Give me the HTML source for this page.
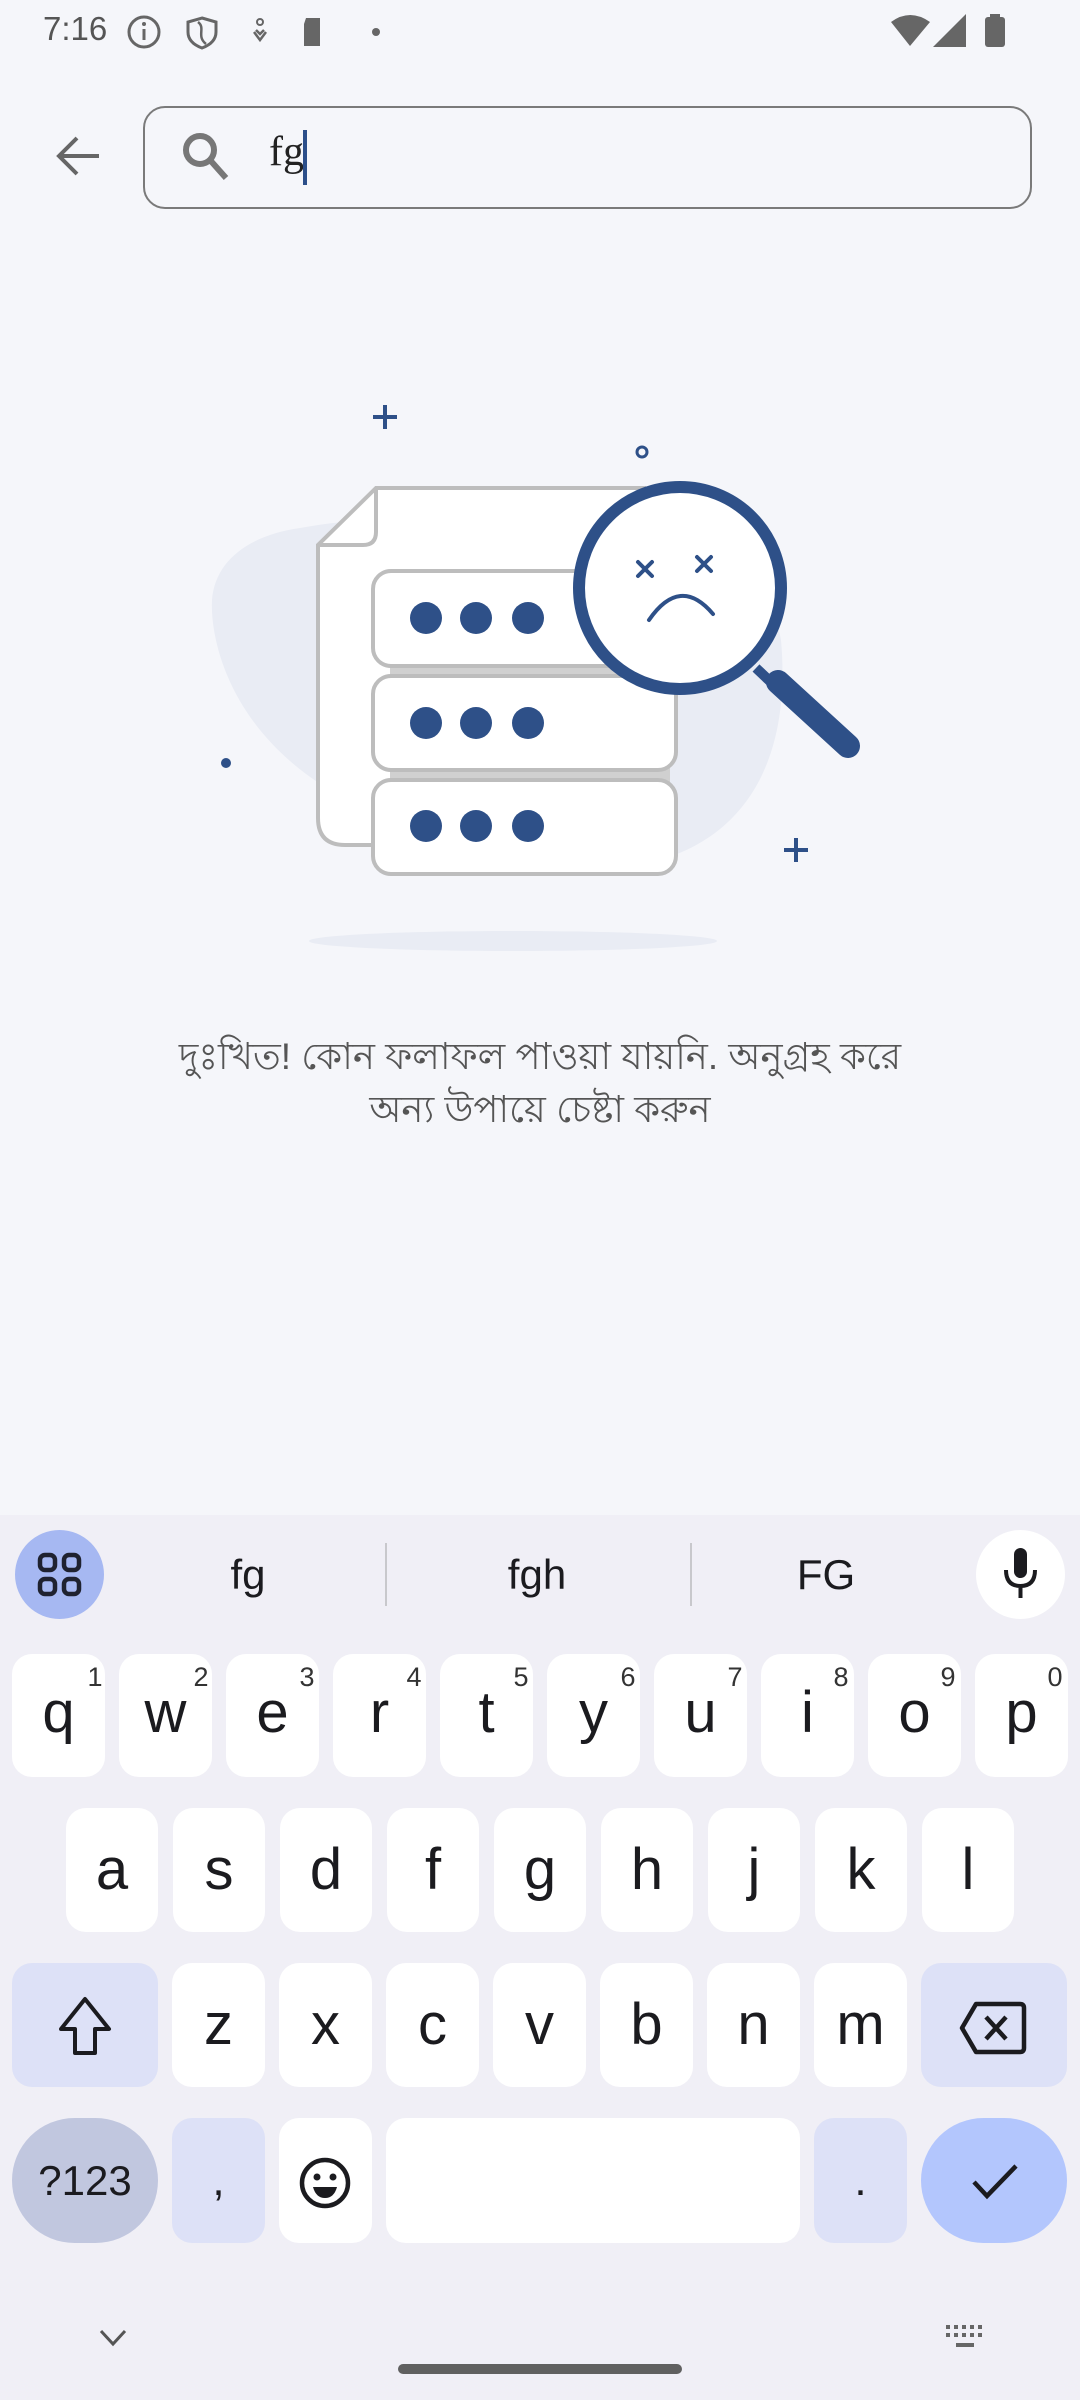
<!DOCTYPE html>
<html><head><meta charset="utf-8">
<style>
*{margin:0;padding:0;box-sizing:border-box}
body{width:1080px;height:2400px;background:#f5f6fa;position:relative;overflow:hidden;font-family:"Liberation Sans",sans-serif}
.abs{position:absolute}
.kb{position:absolute;left:0;top:1515px;width:1080px;height:885px;background:#f0eff6}
.key{position:absolute;background:#fff;border-radius:20px;color:#1b1b1f;font-size:58px;text-align:center}
.n{position:absolute;font-size:27px;color:#333;width:30px;text-align:center}
.sug{position:absolute;top:1551px;font-size:42px;color:#1b1b1f;transform:translateX(-50%)}
</style></head><body>
<div class="abs" style="left:43px;top:10px;font-size:33px;color:#555">7:16</div>
<svg class="abs" style="left:126px;top:14px" width="260" height="36" viewBox="0 0 260 36">
 <circle cx="18" cy="18" r="15" fill="none" stroke="#666" stroke-width="3"/>
 <rect x="16.5" y="15" width="3" height="11" fill="#666"/><circle cx="18" cy="10" r="2" fill="#666"/>
 <path d="M76 4 L90 8 V18 C90 26 84 31 76 34 C68 31 62 26 62 18 V8 Z" fill="none" stroke="#666" stroke-width="3"/>
 <path d="M72 8 C80 14 70 22 80 30" fill="none" stroke="#666" stroke-width="2.5"/>
 <circle cx="134" cy="8" r="3" fill="none" stroke="#666" stroke-width="2"/>
 <path d="M128 18 L134 26 L140 18 M130 16 L134 20 L138 16" fill="none" stroke="#666" stroke-width="2.5"/>
 <path d="M180 4 H194 V32 H178 V10 Z" fill="#666"/>
 <circle cx="250" cy="18" r="4" fill="#666"/>
</svg>
<svg class="abs" style="left:888px;top:12px" width="130" height="40" viewBox="0 0 130 40">
 <path d="M3 10 Q22 -4 42 10 L22 34 Z" fill="#666"/>
 <path d="M45 35 L78 2 V35 Z" fill="#666"/>
 <rect x="97" y="5" width="20" height="30" rx="3" fill="#666"/><rect x="102" y="2" width="10" height="4" fill="#666"/>
</svg>
<svg class="abs" style="left:55px;top:134px" width="48" height="44" viewBox="0 0 48 44">
 <path d="M44 22 H6 M22 4 L4 22 L22 40" fill="none" stroke="#666" stroke-width="4"/>
</svg>
<div class="abs" style="left:143px;top:106px;width:889px;height:103px;border:2px solid #7a7a7a;border-radius:22px;background:#f5f6fa"></div>
<svg class="abs" style="left:180px;top:132px" width="56" height="50" viewBox="0 0 56 50">
 <circle cx="20" cy="18" r="14" fill="none" stroke="#777" stroke-width="6"/>
 <path d="M30 28 L46 46" stroke="#777" stroke-width="6"/>
</svg>
<div class="abs" style="left:269px;top:128px;font-family:'Liberation Serif',serif;font-size:42px;color:#222">fg</div>
<div class="abs" style="left:303px;top:130px;width:4px;height:55px;background:#2c4f8a"></div>
<svg class="abs" style="left:0;top:380px" width="1080" height="600" viewBox="0 380 1080 600">
 <path d="M300 528 C400 510 500 520 560 560 C660 500 760 530 781 640 C790 740 760 830 660 860 C540 880 420 860 330 790 C230 730 210 640 212 600 C215 560 250 535 300 528 Z" fill="#e9ecf4"/>
 <ellipse cx="513" cy="941" rx="204" ry="10" fill="#e9ecf4"/>
 <path d="M376 488 H644 V845 H345 Q318 845 318 818 V545 Z" fill="#fff" stroke="#bdbdbd" stroke-width="4"/>
 <path d="M376 488 V532 Q376 545 363 545 H318" fill="none" stroke="#bdbdbd" stroke-width="4"/>
 <rect x="390" y="664" width="280" height="14" fill="#d0d0d0"/>
 <rect x="390" y="768" width="280" height="14" fill="#d0d0d0"/>
 <rect x="373" y="571" width="303" height="95" rx="18" fill="#fff" stroke="#bdbdbd" stroke-width="4"/>
 <rect x="373" y="676" width="303" height="94" rx="18" fill="#fff" stroke="#bdbdbd" stroke-width="4"/>
 <rect x="373" y="780" width="303" height="94" rx="18" fill="#fff" stroke="#bdbdbd" stroke-width="4"/>
 <g fill="#2e5088">
  <circle cx="426" cy="618" r="16"/><circle cx="476" cy="618" r="16"/><circle cx="528" cy="618" r="16"/>
  <circle cx="426" cy="723" r="16"/><circle cx="476" cy="723" r="16"/><circle cx="528" cy="723" r="16"/>
  <circle cx="426" cy="826" r="16"/><circle cx="476" cy="826" r="16"/><circle cx="528" cy="826" r="16"/>
 </g>
 <path d="M756 668 L775 686" stroke="#2e5088" stroke-width="10"/>
 <path d="M778 682 L848 746" stroke="#2e5088" stroke-width="24" stroke-linecap="round"/>
 <circle cx="680" cy="588" r="101" fill="#fff" stroke="#2e5088" stroke-width="12"/>
 <g stroke="#2e5088" stroke-width="4" stroke-linecap="round" fill="none">
  <path d="M638 562 L652 576 M652 562 L638 576"/>
  <path d="M697 557 L711 571 M711 557 L697 571"/>
  <path d="M649 620 Q680 575 713 614"/>
 </g>
 <path d="M385 405 V429 M373 417 H397" stroke="#2e5088" stroke-width="4"/>
 <circle cx="642" cy="452" r="5" fill="none" stroke="#2e5088" stroke-width="3"/>
 <circle cx="226" cy="763" r="5" fill="#2e5088"/>
 <path d="M796 838 V862 M784 850 H808" stroke="#2e5088" stroke-width="4"/>
</svg>
<div class="abs" style="left:0;top:1030px;width:1080px;text-align:center;font-size:37px;line-height:53px;color:#555;font-family:'Liberation Sans',sans-serif">দুঃখিত! কোন ফলাফল পাওয়া যায়নি. অনুগ্রহ করে<br>অন্য উপায়ে চেষ্টা করুন</div>
<div class="kb"></div>
<div class="abs" style="left:15px;top:1530px;width:89px;height:89px;border-radius:50%;background:#a6b8f2"></div>
<svg class="abs" style="left:37px;top:1552px" width="46" height="46" viewBox="0 0 46 46">
 <g fill="none" stroke="#1f2230" stroke-width="4.5"><rect x="3" y="3" width="15" height="15" rx="5"/><rect x="27" y="3" width="15" height="15" rx="5"/><rect x="3" y="27" width="15" height="15" rx="5"/><rect x="27" y="27" width="15" height="15" rx="5"/></g>
</svg>
<div class="sug" style="left:248px">fg</div>
<div class="sug" style="left:537px">fgh</div>
<div class="sug" style="left:826px">FG</div>
<div class="abs" style="left:385px;top:1543px;width:2px;height:63px;background:#c8c8cc"></div>
<div class="abs" style="left:690px;top:1543px;width:2px;height:63px;background:#c8c8cc"></div>
<div class="abs" style="left:976px;top:1530px;width:89px;height:89px;border-radius:50%;background:#fff"></div>
<svg class="abs" style="left:996px;top:1548px" width="50" height="52" viewBox="0 0 50 52">
 <rect x="18" y="0" width="13" height="30" rx="6.5" fill="#1b1b1f"/>
 <path d="M10 22 Q10 38 24.5 38 Q39 38 39 22 M24.5 38 V50" fill="none" stroke="#1b1b1f" stroke-width="4"/>
</svg>
<!-- row1 -->
<div class="key" style="left:12px;top:1654px;width:93px;height:123px;line-height:118px">q</div>
<div class="key" style="left:119px;top:1654px;width:93px;height:123px;line-height:118px">w</div>
<div class="key" style="left:226px;top:1654px;width:93px;height:123px;line-height:118px">e</div>
<div class="key" style="left:333px;top:1654px;width:93px;height:123px;line-height:118px">r</div>
<div class="key" style="left:440px;top:1654px;width:93px;height:123px;line-height:118px">t</div>
<div class="key" style="left:547px;top:1654px;width:93px;height:123px;line-height:118px">y</div>
<div class="key" style="left:654px;top:1654px;width:93px;height:123px;line-height:118px">u</div>
<div class="key" style="left:761px;top:1654px;width:93px;height:123px;line-height:118px">i</div>
<div class="key" style="left:868px;top:1654px;width:93px;height:123px;line-height:118px">o</div>
<div class="key" style="left:975px;top:1654px;width:93px;height:123px;line-height:118px">p</div>
<div class="n" style="left:80px;top:1662px">1</div>
<div class="n" style="left:186px;top:1662px">2</div>
<div class="n" style="left:292px;top:1662px">3</div>
<div class="n" style="left:399px;top:1662px">4</div>
<div class="n" style="left:506px;top:1662px">5</div>
<div class="n" style="left:613px;top:1662px">6</div>
<div class="n" style="left:720px;top:1662px">7</div>
<div class="n" style="left:826px;top:1662px">8</div>
<div class="n" style="left:933px;top:1662px">9</div>
<div class="n" style="left:1040px;top:1662px">0</div>
<!-- row2 -->
<div class="key" style="left:66px;top:1808px;width:92px;height:124px;line-height:124px">a</div>
<div class="key" style="left:173px;top:1808px;width:92px;height:124px;line-height:124px">s</div>
<div class="key" style="left:280px;top:1808px;width:92px;height:124px;line-height:124px">d</div>
<div class="key" style="left:387px;top:1808px;width:92px;height:124px;line-height:124px">f</div>
<div class="key" style="left:494px;top:1808px;width:92px;height:124px;line-height:124px">g</div>
<div class="key" style="left:601px;top:1808px;width:92px;height:124px;line-height:124px">h</div>
<div class="key" style="left:708px;top:1808px;width:92px;height:124px;line-height:124px">j</div>
<div class="key" style="left:815px;top:1808px;width:92px;height:124px;line-height:124px">k</div>
<div class="key" style="left:922px;top:1808px;width:92px;height:124px;line-height:124px">l</div>
<!-- row3 -->
<div class="key" style="left:12px;top:1963px;width:146px;height:124px;background:#dde1f7"></div>
<svg class="abs" style="left:55px;top:1995px" width="60" height="62" viewBox="0 0 60 62">
 <path d="M30 4 L54 34 H40 V58 H20 V34 H6 Z" fill="none" stroke="#1b1b1f" stroke-width="4" stroke-linejoin="round"/>
</svg>
<div class="key" style="left:172px;top:1963px;width:93px;height:124px;line-height:124px">z</div>
<div class="key" style="left:279px;top:1963px;width:93px;height:124px;line-height:124px">x</div>
<div class="key" style="left:386px;top:1963px;width:93px;height:124px;line-height:124px">c</div>
<div class="key" style="left:493px;top:1963px;width:93px;height:124px;line-height:124px">v</div>
<div class="key" style="left:600px;top:1963px;width:93px;height:124px;line-height:124px">b</div>
<div class="key" style="left:707px;top:1963px;width:93px;height:124px;line-height:124px">n</div>
<div class="key" style="left:814px;top:1963px;width:93px;height:124px;line-height:124px">m</div>
<div class="key" style="left:921px;top:1963px;width:146px;height:124px;background:#dde1f7"></div>
<svg class="abs" style="left:958px;top:2000px" width="70" height="56" viewBox="0 0 70 56">
 <path d="M18 4 H62 Q66 4 66 8 V48 Q66 52 62 52 H18 L4 28 Z" fill="none" stroke="#1b1b1f" stroke-width="4.5" stroke-linejoin="round"/>
 <path d="M28 17 L48 39 M48 17 L28 39" stroke="#1b1b1f" stroke-width="4.5"/>
</svg>
<!-- row4 -->
<div class="key" style="left:12px;top:2118px;width:146px;height:125px;border-radius:63px;background:#c1c7df;font-size:42px;line-height:125px">?123</div>
<div class="key" style="left:172px;top:2118px;width:93px;height:125px;background:#dde1f7;line-height:125px;font-size:44px">,</div>
<div class="key" style="left:279px;top:2118px;width:93px;height:125px"></div>
<svg class="abs" style="left:298px;top:2156px" width="54" height="54" viewBox="0 0 54 54">
 <circle cx="27" cy="27" r="23" fill="none" stroke="#1b1b1f" stroke-width="4.5"/>
 <circle cx="19" cy="21" r="3.5" fill="#1b1b1f"/><circle cx="35" cy="21" r="3.5" fill="#1b1b1f"/>
 <path d="M15 31 H39 Q36 42 27 42 Q18 42 15 31 Z" fill="#1b1b1f"/>
</svg>
<div class="key" style="left:386px;top:2118px;width:414px;height:125px"></div>
<div class="key" style="left:814px;top:2118px;width:93px;height:125px;background:#dde1f7;line-height:125px;font-size:44px">.</div>
<div class="key" style="left:921px;top:2118px;width:146px;height:125px;border-radius:63px;background:#b3c6fd"></div>
<svg class="abs" style="left:970px;top:2162px" width="50" height="40" viewBox="0 0 50 40">
 <path d="M4 20 L17 34 L46 4" fill="none" stroke="#1b1b1f" stroke-width="4.5"/>
</svg>
<svg class="abs" style="left:98px;top:2328px" width="30" height="20" viewBox="0 0 30 20">
 <path d="M3 3 L15 16 L27 3" fill="none" stroke="#555" stroke-width="3"/>
</svg>
<svg class="abs" style="left:946px;top:2325px" width="42" height="26" viewBox="0 0 42 26">
 <g fill="#666"><rect x="0" y="0" width="4" height="4"/><rect x="8" y="0" width="4" height="4"/><rect x="16" y="0" width="4" height="4"/><rect x="24" y="0" width="4" height="4"/><rect x="32" y="0" width="4" height="4"/>
 <rect x="0" y="8" width="4" height="4"/><rect x="8" y="8" width="4" height="4"/><rect x="16" y="8" width="4" height="4"/><rect x="24" y="8" width="4" height="4"/><rect x="32" y="8" width="4" height="4"/>
 <rect x="10" y="18" width="18" height="4"/></g>
</svg>
<div class="abs" style="left:398px;top:2364px;width:284px;height:10px;border-radius:5px;background:#606060"></div>
</body></html>
